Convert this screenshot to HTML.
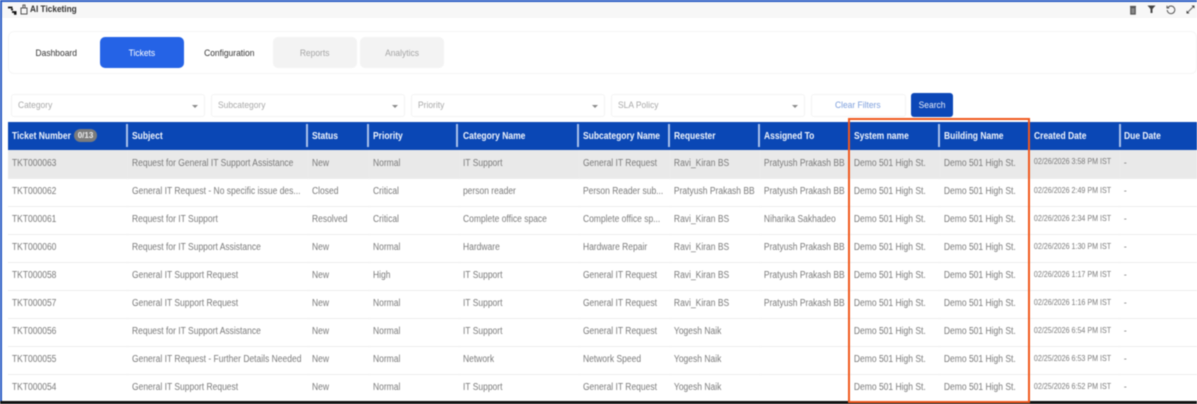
<!DOCTYPE html>
<html><head><meta charset="utf-8">
<style>
html,body{margin:0;padding:0;background:#fff}
body{width:1197px;height:404px;position:relative;overflow:hidden;font-family:"Liberation Sans",sans-serif}
.wrap{position:absolute;left:0;top:0;width:1197px;height:404px;filter:blur(.4px)}
.a{position:absolute}
.t{position:absolute;white-space:nowrap;transform-origin:0 50%;line-height:14px}
table{position:absolute;left:8px;top:150px;border-collapse:collapse;table-layout:fixed;width:1398.82px;transform:scaleX(.85);transform-origin:0 0}
td{padding:0 0 0 4.7px;box-sizing:border-box;font-size:10px;color:#7a7a7a;white-space:nowrap;border-bottom:1px solid #ececec;line-height:14px}
tr td{height:28px}
tr:first-child td{background:#e9e9e9}
td.d{font-size:8.4px;padding-top:0;padding-bottom:5px}
.h{position:absolute;top:122px;height:27px;line-height:29px;font-size:10px;font-weight:bold;color:#eef3fc;white-space:nowrap;transform:scaleX(.85);transform-origin:0 50%}
.s{position:absolute;top:124px;width:2px;height:23px;background:#a9c0ea}
.tab{position:absolute;top:37px;height:31px;line-height:33px;text-align:center;font-size:9.5px;border-radius:5px}
.tab span,.b span{display:inline-block;transform:scaleX(.89)}
.sel{position:absolute;top:94px;height:23px;border:1px solid #f3f3f3;border-radius:3px;background:#fff;box-sizing:border-box}
.sel span{position:absolute;left:6px;top:0;line-height:22px;font-size:9.5px;color:#a9a9a9;transform:scaleX(.89);transform-origin:0 50%}
.sel i{position:absolute;right:6px;top:10px;width:0;height:0;border-left:3px solid transparent;border-right:3px solid transparent;border-top:3px solid #8a8a8a}
</style></head>
<body>
<div class="wrap">
<div class="a" style="left:0;top:0;width:1197px;height:2px;background:#2a5bc4"></div>
<div class="a" style="left:0;top:0;width:2px;height:404px;background:#2a5bc4"></div>
<div class="a" style="left:2px;top:2px;width:1195px;height:16px;background:#f7f7f7"></div>

<svg class="a" style="left:8px;top:5px" width="9" height="10" viewBox="0 0 9 10"><path d="M0 2.500h4.500M3 4.500h2M4 7h4.500M6 8.800h2.500" stroke="#111" stroke-width="1.800" fill="none"/></svg>
<svg class="a" style="left:20px;top:4px" width="8" height="11" viewBox="0 0 8 11"><path d="M1 4h6v6H1zM3 4V1h2v3" stroke="#555" stroke-width="1" fill="none"/></svg>
<div class="t" style="left:30px;top:3px;font-size:9.500px;font-weight:bold;color:#333;transform:scaleX(.87)">AI Ticketing</div>

<svg class="a" style="left:1129px;top:5px" width="8" height="10" viewBox="0 0 8 10"><path d="M1 1.500h6M1.800 2.500h4.400v6.500H1.800z" stroke="#555" stroke-width="1.200" fill="#888"/></svg>
<svg class="a" style="left:1147px;top:5px" width="9" height="9" viewBox="0 0 9 9"><path d="M0.500 0.500h8L5.500 4v4h-2V4z" fill="#444"/></svg>
<svg class="a" style="left:1166px;top:5px" width="10" height="10" viewBox="0 0 10 10"><path d="M2 2.500A3.800 3.800 0 1 1 1.200 5M1 0.800v2.200h2.200" stroke="#555" stroke-width="1" fill="none"/></svg>
<svg class="a" style="left:1186px;top:5px" width="9" height="9" viewBox="0 0 9 9"><path d="M1 8L8 1" stroke="#666" stroke-width="1"/><path d="M5.500 0.500h3v3zM0.500 5.500v3h3z" fill="#444"/></svg>

<div class="a" style="left:8px;top:31px;width:1189px;height:43px;border:1px solid #f5f5f5;border-radius:6px;box-sizing:border-box"></div>
<div class="tab" style="left:16px;width:80px;color:#333"><span>Dashboard</span></div>
<div class="tab" style="left:100px;width:84px;background:#2563e6;color:#fff"><span>Tickets</span></div>
<div class="tab" style="left:188px;width:83px;color:#333"><span>Configuration</span></div>
<div class="tab" style="left:273px;width:84px;background:#f3f3f3;color:#a5a5a5"><span>Reports</span></div>
<div class="tab" style="left:360px;width:84px;background:#f3f3f3;color:#a5a5a5"><span>Analytics</span></div>

<div class="sel" style="left:11px;width:194px"><span>Category</span><i></i></div>
<div class="sel" style="left:211px;width:194px"><span>Subcategory</span><i></i></div>
<div class="sel" style="left:411px;width:194px"><span>Priority</span><i></i></div>
<div class="sel" style="left:611px;width:194px"><span>SLA Policy</span><i></i></div>
<div class="sel" style="left:811px;width:95px"><span style="left:23px;color:#7d9fdc">Clear Filters</span></div>
<div class="a b" style="left:911px;top:93px;width:42px;height:24px;line-height:25px;background:#0c47b7;border-radius:3px;color:#e8eefa;font-size:9.500px;text-align:center"><span>Search</span></div>

<div class="a" style="left:8px;top:122px;width:1189px;height:28px;background:#0a47b5"></div>
<div class="h" style="left:12px">Ticket Number</div>
<div class="a" style="left:74px;top:129px;width:23px;height:13px;line-height:13px;border-radius:7px;background:#7c7c7c;color:#eee;font-size:8px;font-weight:bold;text-align:center">0/13</div>
<div class="s" style="left:126px"></div><div class="h" style="left:132px">Subject</div>
<div class="s" style="left:306px"></div><div class="h" style="left:312px">Status</div>
<div class="s" style="left:367px"></div><div class="h" style="left:373px">Priority</div>
<div class="s" style="left:456px"></div><div class="h" style="left:463px">Category Name</div>
<div class="s" style="left:577px"></div><div class="h" style="left:583px">Subcategory Name</div>
<div class="s" style="left:668px"></div><div class="h" style="left:674px">Requester</div>
<div class="s" style="left:758px"></div><div class="h" style="left:764px">Assigned To</div>
<div class="s" style="left:848px"></div><div class="h" style="left:854px">System name</div>
<div class="s" style="left:938px"></div><div class="h" style="left:944px">Building Name</div>
<div class="s" style="left:1028px"></div><div class="h" style="left:1034px">Created Date</div>
<div class="s" style="left:1119px"></div><div class="h" style="left:1124px">Due Date</div>

<table>
<colgroup><col style="width:141.18px"><col style="width:211.76px"><col style="width:71.76px"><col style="width:105.88px"><col style="width:141.18px"><col style="width:107.06px"><col style="width:105.88px"><col style="width:105.88px"><col style="width:105.88px"><col style="width:105.88px"><col style="width:105.88px"><col style="width:90.59px"></colgroup>
<tr><td>TKT000063</td><td>Request for General IT Support Assistance</td><td>New</td><td>Normal</td><td>IT Support</td><td>General IT Request</td><td>Ravi_Kiran BS</td><td>Pratyush Prakash BB</td><td>Demo 501 High St.</td><td>Demo 501 High St.</td><td class="d">02/26/2026 3:58 PM IST</td><td>-</td></tr>
<tr><td>TKT000062</td><td>General IT Request - No specific issue des...</td><td>Closed</td><td>Critical</td><td>person reader</td><td>Person Reader sub...</td><td>Pratyush Prakash BB</td><td>Pratyush Prakash BB</td><td>Demo 501 High St.</td><td>Demo 501 High St.</td><td class="d">02/26/2026 2:49 PM IST</td><td>-</td></tr>
<tr><td>TKT000061</td><td>Request for IT Support</td><td>Resolved</td><td>Critical</td><td>Complete office space</td><td>Complete office sp...</td><td>Ravi_Kiran BS</td><td>Niharika Sakhadeo</td><td>Demo 501 High St.</td><td>Demo 501 High St.</td><td class="d">02/26/2026 2:34 PM IST</td><td>-</td></tr>
<tr><td>TKT000060</td><td>Request for IT Support Assistance</td><td>New</td><td>Normal</td><td>Hardware</td><td>Hardware Repair</td><td>Ravi_Kiran BS</td><td>Pratyush Prakash BB</td><td>Demo 501 High St.</td><td>Demo 501 High St.</td><td class="d">02/26/2026 1:30 PM IST</td><td>-</td></tr>
<tr><td>TKT000058</td><td>General IT Support Request</td><td>New</td><td>High</td><td>IT Support</td><td>General IT Request</td><td>Ravi_Kiran BS</td><td>Pratyush Prakash BB</td><td>Demo 501 High St.</td><td>Demo 501 High St.</td><td class="d">02/26/2026 1:17 PM IST</td><td>-</td></tr>
<tr><td>TKT000057</td><td>General IT Support Request</td><td>New</td><td>Normal</td><td>IT Support</td><td>General IT Request</td><td>Ravi_Kiran BS</td><td>Pratyush Prakash BB</td><td>Demo 501 High St.</td><td>Demo 501 High St.</td><td class="d">02/26/2026 1:16 PM IST</td><td>-</td></tr>
<tr><td>TKT000056</td><td>Request for IT Support Assistance</td><td>New</td><td>Normal</td><td>IT Support</td><td>General IT Request</td><td>Yogesh Naik</td><td></td><td>Demo 501 High St.</td><td>Demo 501 High St.</td><td class="d">02/25/2026 6:54 PM IST</td><td>-</td></tr>
<tr><td>TKT000055</td><td>General IT Request - Further Details Needed</td><td>New</td><td>Normal</td><td>Network</td><td>Network Speed</td><td>Yogesh Naik</td><td></td><td>Demo 501 High St.</td><td>Demo 501 High St.</td><td class="d">02/25/2026 6:53 PM IST</td><td>-</td></tr>
<tr><td>TKT000054</td><td>General IT Support Request</td><td>New</td><td>Normal</td><td>IT Support</td><td>General IT Request</td><td>Yogesh Naik</td><td></td><td>Demo 501 High St.</td><td>Demo 501 High St.</td><td class="d">02/25/2026 6:52 PM IST</td><td>-</td></tr>
</table>

<div class="a" style="left:0;top:401px;width:1197px;height:3px;background:#111"></div>
<div class="a" style="left:848px;top:118px;width:182px;height:285px;border:2px solid #f0581e;box-sizing:border-box"></div>
</div>
</body></html>
